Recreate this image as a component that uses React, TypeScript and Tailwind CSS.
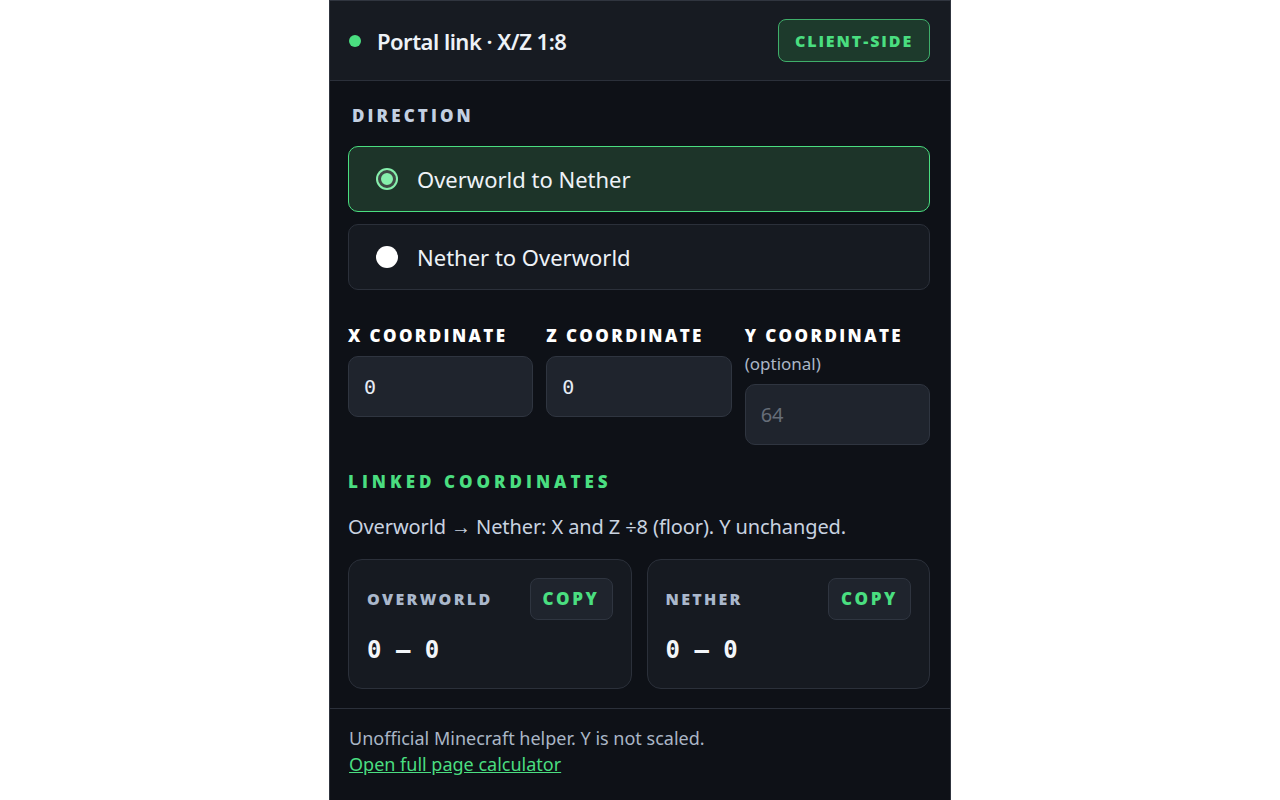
const sans = "font-['Noto_Sans','Open_Sans',sans-serif]";
const heavy = "font-['Open_Sans','Noto_Sans',sans-serif] font-extrabold";
const mono = "font-['DejaVu_Sans_Mono','Liberation_Mono',monospace]";

const Radio = ({ label, checked }: { label: string; checked?: boolean }) => (
    <div
        className={`flex items-center gap-[19px] h-[66px] px-[27px] rounded-[10px] border ${
            checked ? "border-[#4ade80] bg-[#1d3429]" : "border-[#2b303a] bg-[#161a21]"
        }`}
    >
        {checked ? (
            <div className="size-[22px] rounded-full bg-[#86efac] p-[2px]">
                <div className="size-full rounded-full border-[3px] border-[#3e4a45] bg-[#86efac]" />
            </div>
        ) : (
            <div className="size-[22px] rounded-full bg-white" />
        )}
        <span className="text-[22px] text-[#eef2f7]">{label}</span>
    </div>
);

const CoordInput = ({ label, value, optional }: { label: string; value: string; optional?: boolean }) => (
    <div className="flex flex-col">
        <span className={`${heavy} text-[17px] tracking-[2.4px] text-white leading-[20px]`}>{label}</span>
        {optional && <span className="text-[17px] text-[#aab6c6] leading-[20px] mt-[8px]">(optional)</span>}
        <div className="mt-[10px] h-[61px] rounded-[10px] border border-[#2f3540] bg-[#1f242d] flex items-center px-[15px]">
            {optional ? (
                <span className="text-[20px] text-[#666d78]">{value}</span>
            ) : (
                <span className={`${mono} text-[20px] text-[#e6ecf5]`}>{value}</span>
            )}
        </div>
    </div>
);

const ResultCard = ({ label }: { label: string }) => (
    <div className="h-[130px] rounded-[14px] border border-[#2b303a] bg-[#161a21] pl-[18px] pr-[18px] pt-[18px]">
        <div className="flex items-center justify-between">
            <span className={`${heavy} text-[16px] tracking-[2.3px] text-[#aab8cc]`}>{label}</span>
            <div className={`${heavy} h-[42px] w-[83px] flex items-center justify-center rounded-[8px] border border-[#2f3540] bg-[#1f242d] text-[17px] tracking-[2.6px] text-[#4ade80]`}>
                COPY
            </div>
        </div>
        <div className={`${mono} mt-[12px] text-[24px] font-bold text-[#f3f6fa]`}>0 — 0</div>
    </div>
);

export default function App() {
    return (
        <div className={`${sans} min-h-[800px] bg-white flex justify-center`}>
            <div className="w-[622px] h-[800px] bg-[#0e1117] border-x border-t border-[#30353f] flex flex-col">
                <div className="h-[80px] shrink-0 bg-[#171b22] border-b border-[#2b303a] flex items-center justify-between pl-[19px] pr-[20px]">
                    <div className="flex items-center gap-[16px]">
                        <div className="size-[12px] rounded-full bg-[#4ade80]" />
                        <span className="text-[22px] font-semibold tracking-[-0.5px] text-[#eef2f7] mt-[2px]">Portal link · X/Z 1:8</span>
                    </div>
                    <div className={`${heavy} h-[43px] w-[152px] flex items-center justify-center rounded-[8px] border border-[#3fae6a] bg-[#1d3a2c] text-[16px] tracking-[1.9px] text-[#4ade80]`}>
                        CLIENT-SIDE
                    </div>
                </div>

                <div className="pl-[18px] pr-[20px] pt-[25px] flex-1">
                    <div className={`${heavy} text-[17px] tracking-[3.1px] text-[#c3d0e2] leading-[20px] pl-[4px]`}>DIRECTION</div>
                    <div className="mt-[20px] flex flex-col gap-[12px]">
                        <Radio label="Overworld to Nether" checked />
                        <Radio label="Nether to Overworld" />
                    </div>

                    <div className="mt-[36px] grid grid-cols-3 gap-[13px]">
                        <CoordInput label="X COORDINATE" value="0" />
                        <CoordInput label="Z COORDINATE" value="0" />
                        <CoordInput label="Y COORDINATE" value="64" optional />
                    </div>

                    <div className={`${heavy} mt-[27px] text-[17px] tracking-[4px] text-[#4ade80] leading-[20px]`}>LINKED COORDINATES</div>
                    <div className="mt-[22px] text-[20px] text-[#c9d3e0] leading-[26px] tracking-[-0.1px]">
                        Overworld → Nether: X and Z ÷8 (floor). Y unchanged.
                    </div>

                    <div className="mt-[19px] grid grid-cols-2 gap-[15px]">
                        <ResultCard label="OVERWORLD" />
                        <ResultCard label="NETHER" />
                    </div>
                </div>

                <div className="shrink-0 border-t border-[#2b303a] px-[19px] pt-[16px] h-[92px]">
                    <div className="text-[18px] text-[#aab6c6] leading-[26px]">Unofficial Minecraft helper. Y is not scaled.</div>
                    <a className="text-[18px] text-[#4ade80] underline leading-[26px]" href="#">
                        Open full page calculator
                    </a>
                </div>
            </div>
        </div>
    );
}
